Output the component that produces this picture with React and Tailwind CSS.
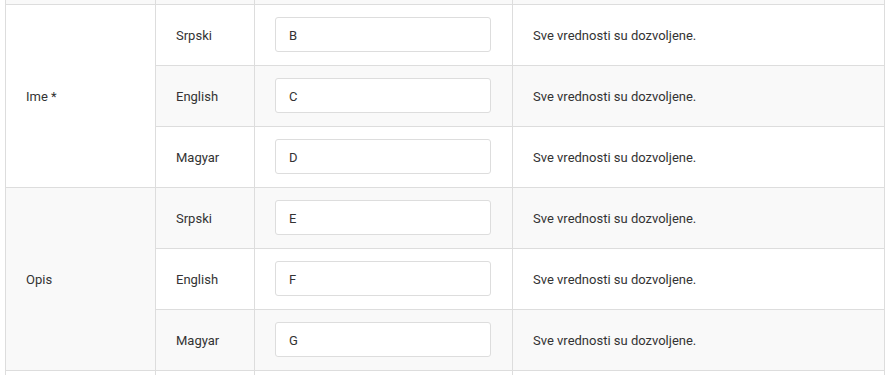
import React from 'react';

const groups = [
  { label: 'Ime *', values: ['B', 'C', 'D'] },
  { label: 'Opis', values: ['E', 'F', 'G'] },
];

const langs = ['Srpski', 'English', 'Magyar'];

const cell = 'border border-[#dddddd] px-5 pt-[2px] align-middle';

export default function App() {
  let rowIndex = 0;
  return (
    <div className="h-[375px] overflow-hidden bg-white pl-[5px] font-['Roboto',sans-serif] text-[13px] text-[#333333]">
      <table className="w-[880px] table-fixed border-collapse border-t-0">
        <colgroup>
          <col className="w-[150px]" />
          <col className="w-[99px]" />
          <col className="w-[258px]" />
          <col />
        </colgroup>
        <tbody>
          <tr className="bg-[#f9f9f9]">
            <td className="h-[4px] border-x border-b border-[#dddddd] p-0" />
            <td className="h-[4px] border-x border-b border-[#dddddd] p-0" />
            <td className="h-[4px] border-x border-b border-[#dddddd] p-0" />
            <td className="h-[4px] border-x border-b border-[#dddddd] p-0" />
          </tr>
          {groups.map((group) =>
            group.values.map((value, i) => {
              const striped = rowIndex++ % 2 === 1;
              return (
                <tr key={group.label + value} className={striped ? 'bg-[#f9f9f9]' : 'bg-white'}>
                  {i === 0 && (
                    <td rowSpan={3} className={cell}>
                      {group.label}
                    </td>
                  )}
                  <td className={`${cell} h-[61px]`}>{langs[i]}</td>
                  <td className="border border-[#dddddd] px-5 align-middle">
                    <input
                      readOnly
                      value={value}
                      className="h-[35px] w-[216px] rounded-[3px] border border-[#dddddd] bg-white pl-[13px] pt-px text-[13px] text-[#333333] outline-none"
                    />
                  </td>
                  <td className={cell}>Sve vrednosti su dozvoljene.</td>
                </tr>
              );
            })
          )}
          <tr className="bg-white">
            <td className={`${cell} h-[61px]`} />
            <td className={cell} />
            <td className={cell} />
            <td className={cell} />
          </tr>
        </tbody>
      </table>
    </div>
  );
}
